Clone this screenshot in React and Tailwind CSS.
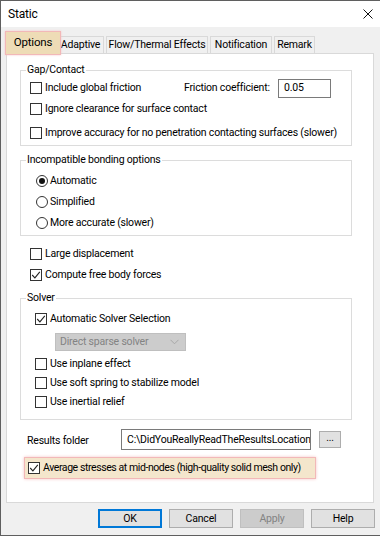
import React from "react";

function CheckBox({ checked }) {
  return (
    <span className="w-[12px] h-[12px] border border-[#333] bg-white flex items-center justify-center shrink-0">
      {checked && (
        <svg width="10" height="10" viewBox="0 0 10 10">
          <path d="M1.2 5 L3.9 7.8 L8.8 1.8" fill="none" stroke="#222" strokeWidth="1.1" />
        </svg>
      )}
    </span>
  );
}

function Radio({ checked }) {
  return (
    <span className="w-[12px] h-[12px] rounded-full border border-[#333] bg-white flex items-center justify-center shrink-0">
      {checked && <span className="w-[6px] h-[6px] rounded-full bg-[#111]" />}
    </span>
  );
}

function CheckRow({ label, checked, className = "" }) {
  return (
    <div className={"flex items-center gap-[3px] whitespace-nowrap " + className}>
      <CheckBox checked={checked} />
      <span>{label}</span>
    </div>
  );
}

function RadioRow({ label, checked }) {
  return (
    <div className="h-[21px] flex items-center gap-[2px] pl-[15px] whitespace-nowrap">
      <Radio checked={checked} />
      <span>{label}</span>
    </div>
  );
}

function Group({ title, className = "", children }) {
  return (
    <fieldset className={"border border-[#dcdcdc] ml-[13px] w-[332px] " + className}>
      <legend className="ml-[5px] px-[1px] leading-[14px]">{title}</legend>
      {children}
    </fieldset>
  );
}

function Tab({ label, width }) {
  return (
    <div className={"h-[17px] border border-b-0 border-[#d9d9d9] bg-[#f0f0f0] flex items-center justify-center whitespace-nowrap " + width}>
      {label}
    </div>
  );
}

function DlgButton({ label, primary, disabled }) {
  let cls = "w-[64px] h-[19px] flex items-center justify-center ";
  if (primary) cls += "border-2 border-[#0078d7] bg-[#e1e1e1]";
  else if (disabled) cls += "border border-[#bfbfbf] bg-[#cccccc] text-[#838383]";
  else cls += "border border-[#adadad] bg-[#e1e1e1]";
  return <div className={cls}>{label}</div>;
}

export default function App() {
  return (
    <div className="w-[380px] h-[536px] bg-[#f0f0f0] border-l border-t border-b border-[#5f5f5f] flex flex-col font-['Roboto',sans-serif] text-[10.5px] tracking-[-0.2px] text-black overflow-hidden">
      {/* title bar */}
      <div className="h-[26px] bg-white flex items-center justify-between pl-[7px] pr-[7px] shrink-0">
        <span className="text-[12px]">Static</span>
        <svg width="10" height="10" viewBox="0 0 10 10">
          <path d="M0.5 0.5 L9.5 9.5 M9.5 0.5 L0.5 9.5" stroke="#111" strokeWidth="1" />
        </svg>
      </div>

      {/* tabs */}
      <div className="flex items-end pl-[4px] mt-[2px] h-[24px] shrink-0">
        <div className="relative z-10 w-[56px] h-[24px] -mr-[4px] -mb-[2px] border border-[#f2b8b8] bg-[#eedcb6] shadow-[0_0_2px_#f5c6c6] flex items-center justify-center">
          <span className="text-[11.5px]">Options</span>
        </div>
        <div className="flex items-end gap-[2px]">
          <Tab label="Adaptive" width="w-[47px]" />
          <Tab label="Flow/Thermal Effects" width="w-[102px]" />
          <Tab label="Notification" width="w-[62px]" />
          <Tab label="Remark" width="w-[41px]" />
        </div>
      </div>

      {/* panel */}
      <div className="ml-[5px] w-[368px] h-[450px] bg-white border border-[#d9d9d9] shrink-0 flex flex-col">
        <Group title="Gap/Contact" className="mt-[9px] pb-[2px]">
          <div className="h-[20px] mt-[1px] flex items-center pl-[9px] whitespace-nowrap">
            <CheckRow label="Include global friction" className="w-[154px]" />
            <span className="w-[94px]">Friction coefficient:</span>
            <div className="w-[53px] h-[19px] border border-[#7a7a7a] bg-white flex items-center pl-[5px]">0.05</div>
          </div>
          <CheckRow label="Ignore clearance for surface contact" className="h-[20px] mt-[1px] pl-[9px]" />
          <CheckRow label="Improve accuracy for no penetration contacting surfaces (slower)" className="h-[20px] mt-[4px] pl-[9px]" />
        </Group>

        <Group title="Incompatible bonding options" className="mt-[7px] pt-[3px] pb-[2px]">
          <RadioRow label="Automatic" checked />
          <RadioRow label="Simplified" />
          <RadioRow label="More accurate (slower)" />
        </Group>

        <CheckRow label="Large displacement" className="h-[21px] mt-[7px] ml-[23px]" />
        <CheckRow label="Compute free body forces" checked className="h-[21px] ml-[23px]" />

        <Group title="Solver" className="mt-[6px] pt-[4px] pb-[8px]">
          <CheckRow label="Automatic Solver Selection" checked className="h-[20px] pl-[14px]" />
          <div className="ml-[34px] mt-[4px] w-[131px] h-[18px] bg-[#cccccc] border border-[#bfbfbf] text-[#838383] flex items-center justify-between pl-[4px] pr-[6px] whitespace-nowrap">
            <span>Direct sparse solver</span>
            <svg width="9" height="6" viewBox="0 0 9 6">
              <path d="M0.5 0.8 L4.5 4.8 L8.5 0.8" fill="none" stroke="#a8a8a8" strokeWidth="1" />
            </svg>
          </div>
          <CheckRow label="Use inplane effect" className="h-[19px] mt-[3px] pl-[14px]" />
          <CheckRow label="Use soft spring to stabilize model" className="h-[19px] pl-[14px]" />
          <CheckRow label="Use inertial relief" className="h-[19px] pl-[14px]" />
        </Group>

        <div className="mt-[9px] ml-[20px] h-[21px] flex items-center whitespace-nowrap">
          <span className="w-[94px] pt-[2px]">Results folder</span>
          <div className="w-[190px] h-[21px] border border-[#7a7a7a] bg-white flex items-center pl-[5px] overflow-hidden">
            C:\DidYouReallyReadTheResultsLocation
          </div>
          <div className="ml-[8px] w-[22px] h-[17px] border border-[#adadad] bg-[#e1e1e1] flex items-center justify-center text-[10px] leading-none pb-[3px]">
            ...
          </div>
        </div>

        <div className="mt-[7px] ml-[17px] w-[292px] h-[22px] border border-[#f2b8b8] bg-[#f4e6cc] shadow-[0_0_3px_#f3c4c4] flex items-center pl-[3px] gap-[3px] whitespace-nowrap">
          <CheckBox checked />
          <span className="tracking-[-0.42px]">Average stresses at mid-nodes (high-quality solid mesh only)</span>
        </div>
      </div>

      {/* buttons */}
      <div className="flex justify-end gap-[7px] mt-[6px] pr-[5px]">
        <DlgButton label="OK" primary />
        <DlgButton label="Cancel" />
        <DlgButton label="Apply" disabled />
        <DlgButton label="Help" />
      </div>
    </div>
  );
}
